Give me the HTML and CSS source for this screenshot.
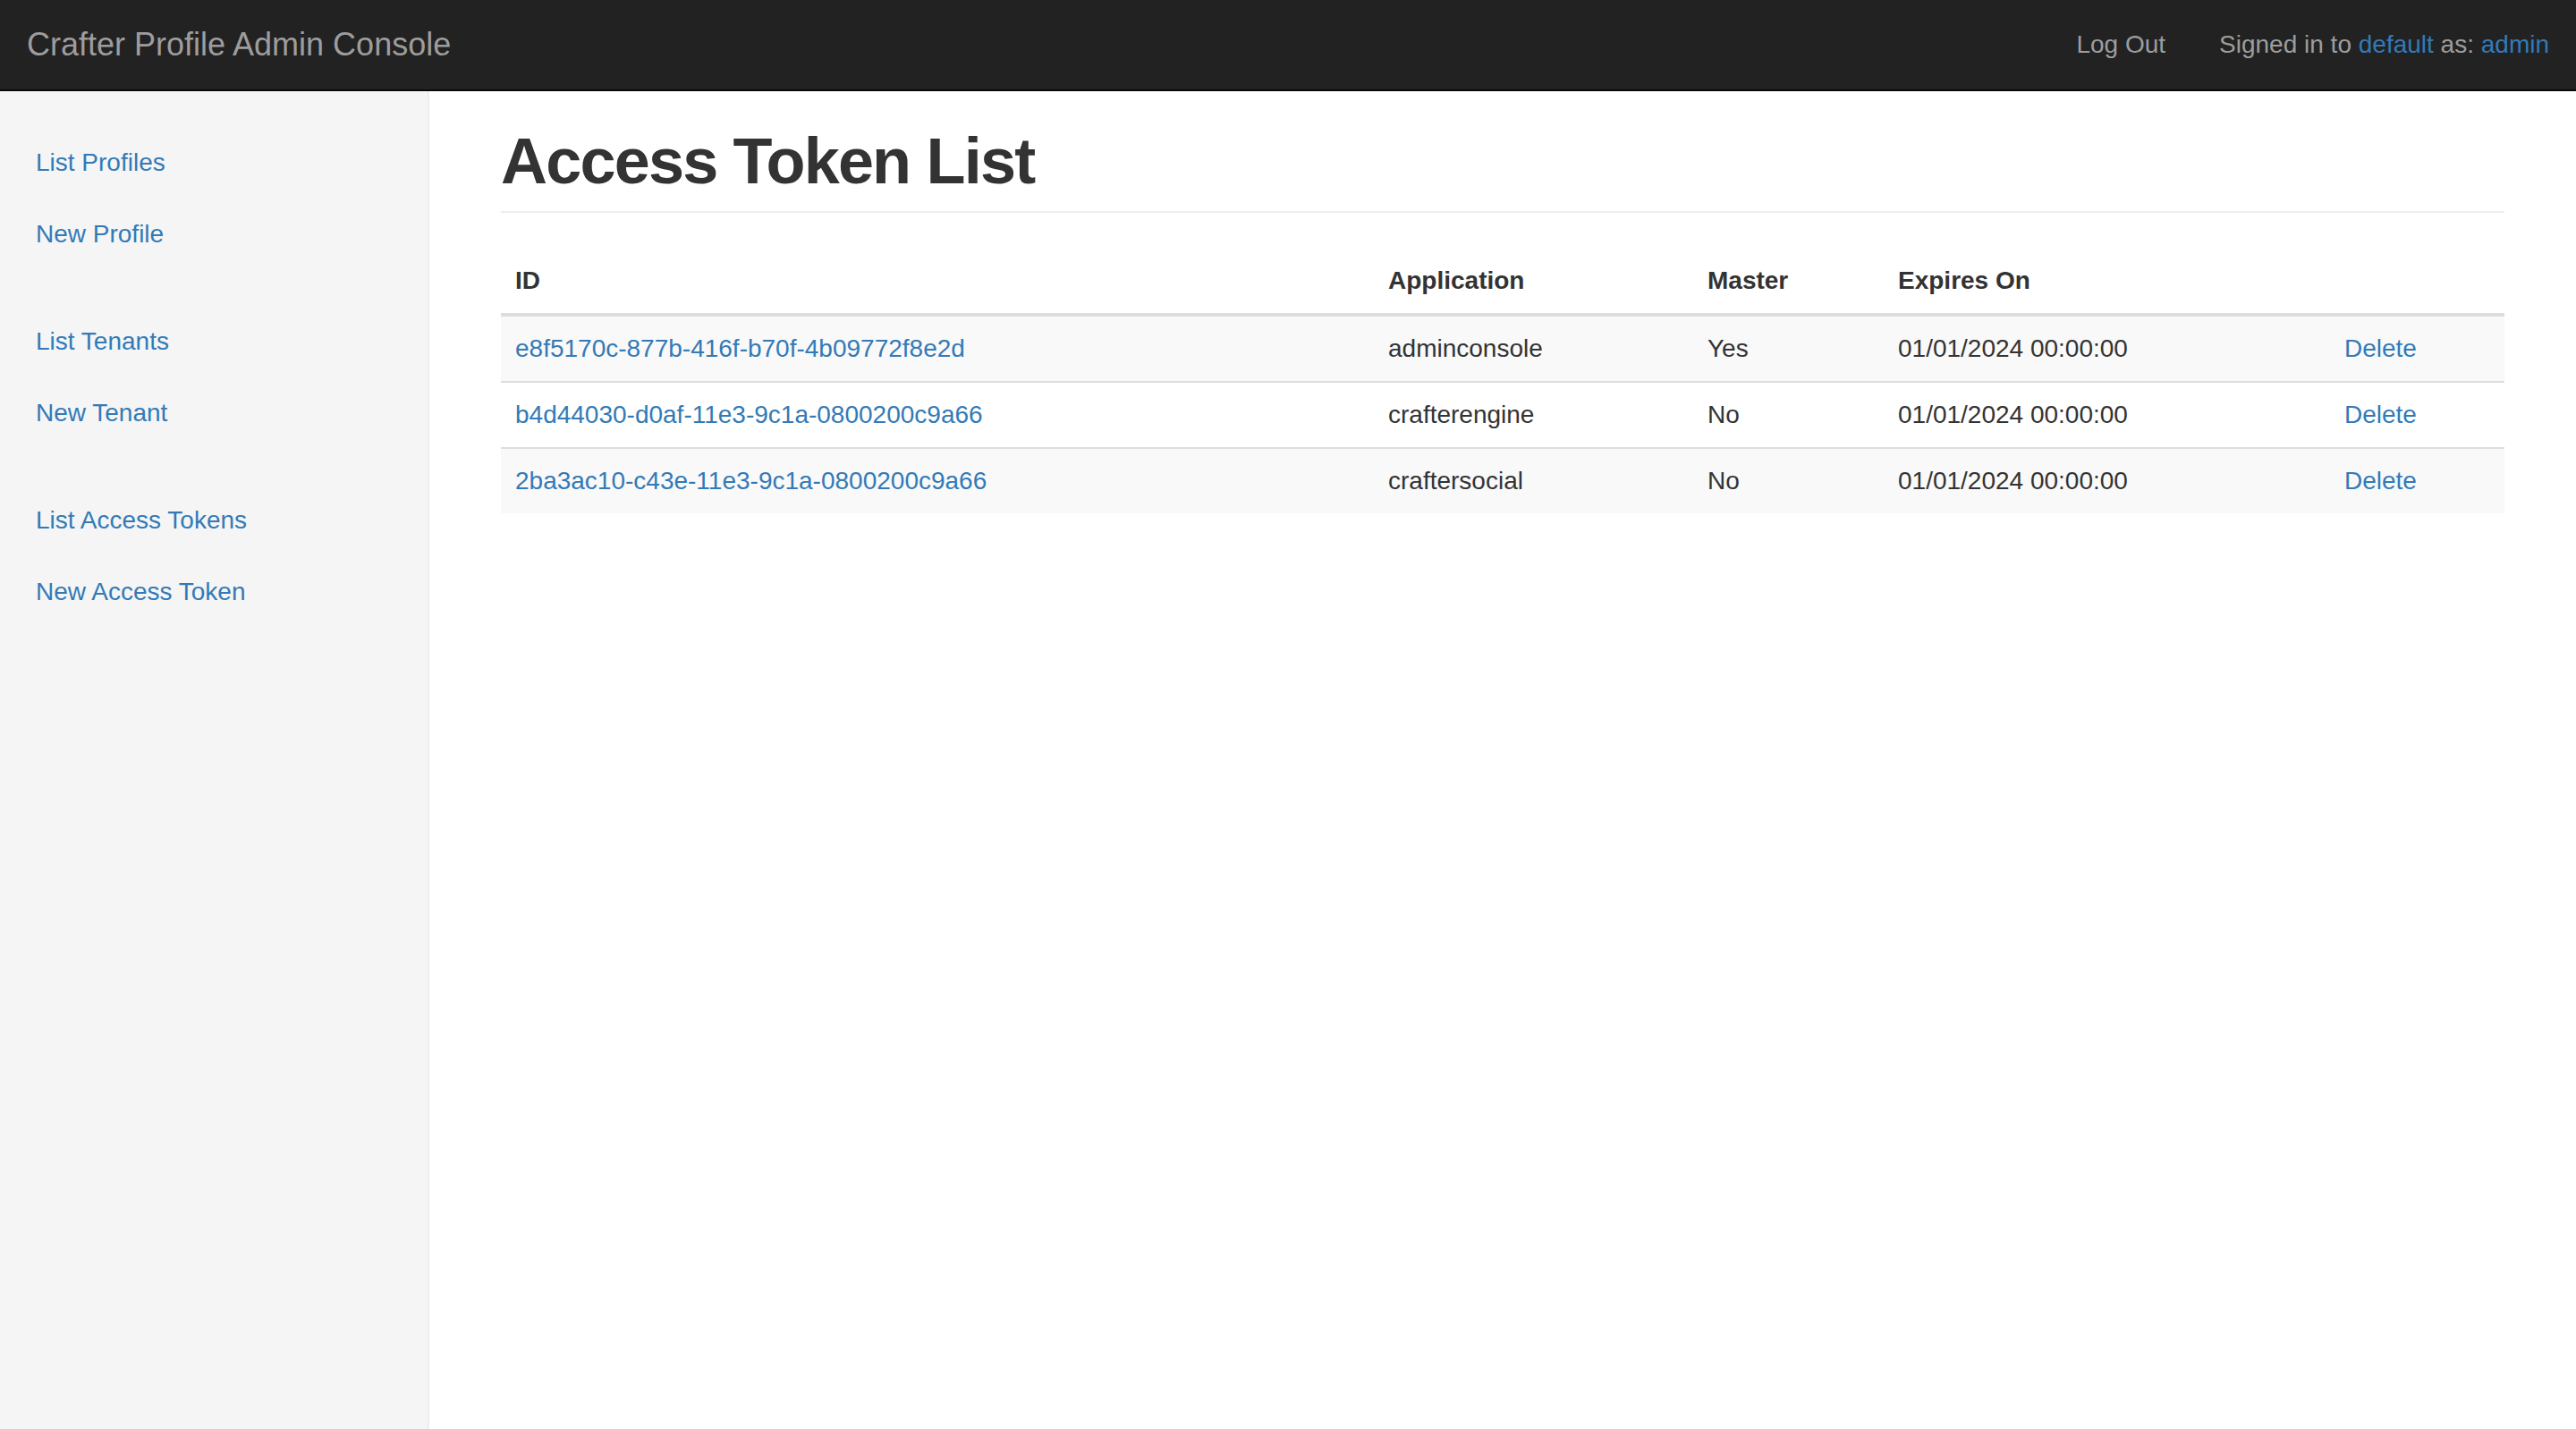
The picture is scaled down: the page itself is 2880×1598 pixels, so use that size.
FILE: index.html
```html
<!DOCTYPE html>
<html lang="en">
<head>
<meta charset="utf-8">
<title>Crafter Profile Admin Console</title>
<link rel="stylesheet" href="styles.css">
</head>
<body>
<header class="navbar">
  <a class="brand" href="#">Crafter Profile Admin Console</a>
  <div class="nav-right">
    <a class="nav-link" href="#">Log Out</a>
    <p class="nav-text">Signed in to <a href="#">default</a> as: <a href="#">admin</a></p>
  </div>
</header>
<div class="layout">
  <aside class="sidebar">
    <ul class="side-nav">
      <li><a href="#">List Profiles</a></li>
      <li><a href="#">New Profile</a></li>
    </ul>
    <ul class="side-nav">
      <li><a href="#">List Tenants</a></li>
      <li><a href="#">New Tenant</a></li>
    </ul>
    <ul class="side-nav">
      <li><a href="#">List Access Tokens</a></li>
      <li><a href="#">New Access Token</a></li>
    </ul>
  </aside>
  <main class="main">
    <h1 class="page-header">Access Token List</h1>
    <table class="table">
      <colgroup>
        <col class="c-id">
        <col class="c-app">
        <col class="c-master">
        <col class="c-exp">
        <col class="c-del">
      </colgroup>
      <thead>
        <tr><th>ID</th><th>Application</th><th>Master</th><th>Expires On</th><th></th></tr>
      </thead>
      <tbody>
        <tr><td><a href="#">e8f5170c-877b-416f-b70f-4b09772f8e2d</a></td><td>adminconsole</td><td>Yes</td><td>01/01/2024 00:00:00</td><td><a href="#">Delete</a></td></tr>
        <tr><td><a href="#">b4d44030-d0af-11e3-9c1a-0800200c9a66</a></td><td>crafterengine</td><td>No</td><td>01/01/2024 00:00:00</td><td><a href="#">Delete</a></td></tr>
        <tr><td><a href="#">2ba3ac10-c43e-11e3-9c1a-0800200c9a66</a></td><td>craftersocial</td><td>No</td><td>01/01/2024 00:00:00</td><td><a href="#">Delete</a></td></tr>
      </tbody>
    </table>
  </main>
</div>
</body>
</html>
```
FILE: styles.css
```css
* { box-sizing: border-box; }
html, body { height: 100%; }
body {
  margin: 0;
  font-family: "Liberation Sans", Arial, sans-serif;
  font-size: 28px;
  line-height: 40px;
  color: #333;
  background: #fff;
  display: flex;
  flex-direction: column;
}
a { color: #337ab7; text-decoration: none; }

.navbar {
  height: 102px;
  flex: 0 0 102px;
  background: #222;
  border-bottom: 2px solid #080808;
  display: flex;
  justify-content: space-between;
  align-items: flex-start;
  padding: 0 30px;
}
.brand {
  color: #9d9d9d;
  font-size: 36px;
  line-height: 40px;
  padding: 30px 0;
}
.nav-right { display: flex; align-items: flex-start; }
.nav-link {
  color: #9d9d9d;
  padding: 30px;
  line-height: 40px;
}
.nav-text {
  margin: 30px 0 0 30px;
  color: #9d9d9d;
  line-height: 40px;
}
.nav-text a { color: #337ab7; }

.layout {
  flex: 1 1 auto;
  display: flex;
  min-height: 0;
}
.sidebar {
  width: 480px;
  flex: 0 0 480px;
  background: #f5f5f5;
  border-right: 2px solid #eee;
  padding: 40px 0;
}
.side-nav {
  list-style: none;
  margin: 0 0 40px 0;
  padding: 0;
}
.side-nav li a {
  display: block;
  padding: 20px 40px;
  line-height: 40px;
}

.main {
  flex: 1 1 auto;
  padding: 40px 80px;
}
.page-header {
  margin: 0 0 40px 0;
  padding-bottom: 18px;
  border-bottom: 2px solid #eee;
  font-size: 72px;
  line-height: 76px;
  font-weight: 700;
  letter-spacing: -1.8px;
  color: #333;
}
.table {
  width: 100%;
  border-collapse: collapse;
  border-spacing: 0;
  table-layout: fixed;
}
.c-id { width: 976px; }
.c-app { width: 357px; }
.c-master { width: 213px; }
.c-exp { width: 499px; }
.c-del { width: 195px; }
.table th {
  text-align: left;
  font-weight: 700;
  padding: 16px;
  line-height: 40px;
  border-bottom: 4px solid #ddd;
}
.table td {
  padding: 16px;
  line-height: 40px;
  border-top: 2px solid #ddd;
  white-space: nowrap;
}
.table tbody tr:nth-child(odd) { background: #f9f9f9; }
```
